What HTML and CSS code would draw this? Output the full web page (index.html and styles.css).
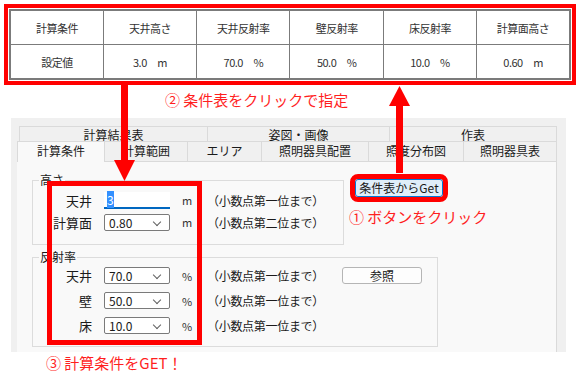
FILE: index.html
```html
<!DOCTYPE html>
<html lang="ja">
<head>
    <meta charset="UTF-8">
    <meta name="viewport" content="width=device-width, initial-scale=1.0">
    <title>計算条件</title>
    <link rel="stylesheet" href="styles.css">
</head>
<body>
    <div class="page">
        <div class="sheet">
            <table class="cond-table">
                <tr>
                    <td>計算条件</td>
                    <td>天井高さ</td>
                    <td>天井反射率</td>
                    <td>壁反射率</td>
                    <td>床反射率</td>
                    <td>計算面高さ</td>
                </tr>
                <tr>
                    <td>設定値</td>
                    <td>3.0　m</td>
                    <td>70.0　%</td>
                    <td>50.0　%</td>
                    <td>10.0　%</td>
                    <td>0.60　m</td>
                </tr>
            </table>
        </div>

        <p class="note note-2">② 条件表をクリックで指定</p>

        <div class="dialog">
            <div class="tabs tabs-top">
                <div class="tab" style="width: 188px;">計算結果表</div>
                <div class="tab" style="width: 182px;">姿図・画像</div>
                <div class="tab" style="width: 168px;">作表</div>
            </div>
            <div class="tabs tabs-bottom">
                <div class="tab active" style="width: 87px;">計算条件</div>
                <div class="tab" style="width: 83px;">計算範囲</div>
                <div class="tab" style="width: 74px;">エリア</div>
                <div class="tab" style="width: 107px;">照明器具配置</div>
                <div class="tab" style="width: 95px;">照度分布図</div>
                <div class="tab" style="width: 94px;">照明器具表</div>
            </div>
            <div class="pane">
                <div class="pane-row">
                    <fieldset class="group group-height">
                        <legend>高さ</legend>
                        <div class="field-row">
                            <span class="label">天井</span>
                            <span class="text-input"><span class="sel">3</span></span>
                            <span class="unit">m</span>
                            <span class="hint">（小数点第一位まで）</span>
                        </div>
                        <div class="field-row">
                            <span class="label">計算面</span>
                            <span class="combo">0.80<span class="chev"></span></span>
                            <span class="unit">m</span>
                            <span class="hint">（小数点第二位まで）</span>
                        </div>
                    </fieldset>
                    <div class="get-col">
                        <button class="btn btn-get">条件表からGet</button>
                        <p class="note note-1">① ボタンをクリック</p>
                    </div>
                </div>
                <fieldset class="group group-refl">
                    <legend>反射率</legend>
                    <div class="field-row">
                        <span class="label">天井</span>
                        <span class="combo">70.0<span class="chev"></span></span>
                        <span class="unit">%</span>
                        <span class="hint">（小数点第一位まで）</span>
                        <button class="btn btn-ref">参照</button>
                    </div>
                    <div class="field-row">
                        <span class="label">壁</span>
                        <span class="combo">50.0<span class="chev"></span></span>
                        <span class="unit">%</span>
                        <span class="hint">（小数点第一位まで）</span>
                    </div>
                    <div class="field-row">
                        <span class="label">床</span>
                        <span class="combo">10.0<span class="chev"></span></span>
                        <span class="unit">%</span>
                        <span class="hint">（小数点第一位まで）</span>
                    </div>
                </fieldset>
            </div>
        </div>

        <p class="note note-3">③ 計算条件をGET！</p>

        <!-- annotation overlays -->
        <div class="focus-box"></div>
        <svg class="arrows" width="580" height="374" viewBox="0 0 580 374">
            <rect x="121" y="85" width="7" height="77" fill="#ff0000"/>
            <polygon points="114,160 135,160 124.5,181" fill="#ff0000"/>
            <polygon points="399.5,86 389,106 410,106" fill="#ff0000"/>
            <rect x="396" y="104" width="7" height="69" fill="#ff0000"/>
        </svg>
    </div>
</body>
</html>
```

FILE: styles.css
```css
body {
    margin: 0;
    background-color: #ffffff;
    font-family: "Noto Sans CJK JP", "Noto Sans", sans-serif;
    color: #1a1a1a;
}
.page {
    position: relative;
    width: 580px;
    height: 374px;
    padding: 4px 4px 0 4px;
    box-sizing: border-box;
    overflow: hidden;
}

/* condition table */
.sheet {
    border: 4px solid #ff0000;
    padding: 1px;
    box-sizing: border-box;
    height: 81px;
}
.cond-table {
    width: 100%;
    height: 71px;
    border-collapse: collapse;
    border: 2px solid #7b7b7b;
    table-layout: fixed;
}
.cond-table td {
    border: 1px solid #7b7b7b;
    text-align: center;
    font-size: 11px;
    letter-spacing: -0.5px;
    color: #333333;
    padding: 0;
}

/* annotations */
.note {
    margin: 0;
    color: #ff1f1f;
    font-size: 15px;
    white-space: nowrap;
}
.note-2 {
    height: 33px;
    line-height: 30px;
    padding-left: 161px;
}
.note-1 {
    margin-top: 9px;
    margin-left: -6px;
    line-height: 22px;
}
.note-3 {
    height: 22px;
    line-height: 22px;
    padding-left: 42px;
}
.focus-box {
    position: absolute;
    left: 47px;
    top: 181px;
    width: 155px;
    height: 164px;
    border: 5px solid #ff0000;
    box-sizing: border-box;
}
.arrows {
    position: absolute;
    left: 0;
    top: 0;
    pointer-events: none;
}

/* dialog */
.dialog {
    margin-left: 7px;
    width: 555px;
    height: 234px;
    box-sizing: border-box;
    background-color: #f0f0f0;
    padding: 8px 0 0 6px;
}
.tabs {
    display: flex;
    font-size: 12px;
}
.tabs-top {
    margin-left: 2px;
    height: 16px;
}
.tabs-bottom {
    height: 20px;
}
.tab {
    box-sizing: border-box;
    border: 1px solid #dadada;
    border-right: none;
    text-align: center;
    line-height: 15px;
    background-color: #f0f0f0;
}
.tab:last-child {
    border-right: 1px solid #dadada;
}
.tabs-bottom .tab {
    line-height: 18px;
    border-top: none;
}
.tabs-bottom .tab.active {
    background-color: #f9f9f9;
    border-top: 1px solid #dadada;
    border-bottom: none;
    margin-top: -1px;
    height: 21px;
}
.pane {
    width: 540px;
    height: 190px;
    box-sizing: border-box;
    background-color: #f9f9f9;
    border-right: 1px solid #dadada;
    padding: 10px 0 0 15px;
}
.pane-row {
    display: flex;
    align-items: flex-start;
}

/* group boxes */
.group {
    margin: 0;
    padding: 0;
    min-width: 0;
    border: 1px solid #dcdcdc;
    box-sizing: border-box;
    font-size: 12px;
}
.group legend {
    padding: 0 1px;
    margin-left: 6px;
    line-height: 16px;
}
.group-height {
    width: 312px;
    height: 73px;
    padding-top: 1px;
    flex-shrink: 0;
}
.group-refl {
    width: 406px;
    height: 98px;
    margin-top: 4px;
}
.field-row {
    display: grid;
    grid-template-columns: 59px 66px 19px 117px 80px;
    column-gap: 12px;
    align-items: center;
    height: 22px;
}
.group-height .field-row {
    grid-template-columns: 59px 66px 19px 110px;
}
.group-refl .field-row {
    height: 25px;
}
.group-refl .field-row:first-of-type {
    margin-top: -2px;
}
.label {
    text-align: right;
    font-size: 13px;
}
.unit {
    font-size: 11px;
    color: #333333;
}
.hint {
    font-size: 12px;
    white-space: nowrap;
    letter-spacing: -0.3px;
    margin-left: -6px;
}
.text-input {
    height: 15px;
    background-color: #ffffff;
    border-bottom: 2px solid #0067c0;
    padding-left: 3px;
    font-size: 12px;
    line-height: 15px;
}
.sel {
    background-color: #3390ff;
    color: #ffffff;
}
.combo {
    position: relative;
    height: 17px;
    box-sizing: border-box;
    background-color: #ffffff;
    border: 1px solid #7a7a7a;
    border-radius: 2px;
    padding-left: 4px;
    font-size: 12px;
    line-height: 15px;
}
.chev {
    position: absolute;
    right: 9px;
    top: 4px;
    width: 5px;
    height: 5px;
    border-right: 1px solid #606060;
    border-bottom: 1px solid #606060;
    transform: rotate(45deg);
}

/* buttons */
.btn {
    font-family: inherit;
    font-size: 12px;
    color: #1a1a1a;
    padding: 0;
    cursor: pointer;
}
.get-col {
    margin-left: 11px;
    padding-top: 7px;
}
.btn-get {
    display: block;
    width: 88px;
    height: 18px;
    line-height: 14px;
    background-color: #e0eef9;
    border: 1px solid #0078d7;
    border-radius: 3px;
    outline: 5px solid #ff0000;
}
.btn-ref {
    width: 80px;
    height: 17px;
    line-height: 13px;
    background-color: #fdfdfd;
    border: 1px solid #b5b5b5;
    border-radius: 3px;
}
```
